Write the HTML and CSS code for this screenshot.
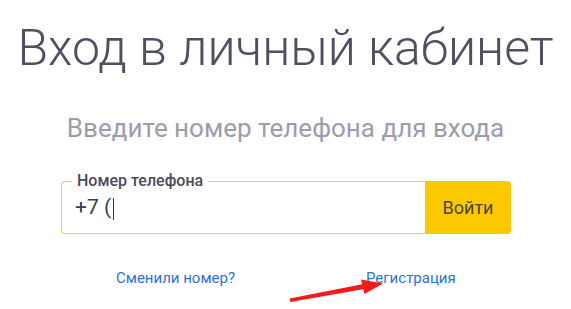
FILE: index.html
```html
<!DOCTYPE html>
<html lang="ru">
<head>
    <meta charset="UTF-8">
    <meta name="viewport" content="width=device-width, initial-scale=1.0">
    <title>Вход в личный кабинет</title>
    <link rel="stylesheet" href="styles.css">
</head>
<body>
    <div class="container">
        <h1>Вход в личный кабинет</h1>
        <p class="subtitle">Введите номер телефона для входа</p>

        <form class="login-form">
            <fieldset class="phone-field">
                <legend>Номер телефона</legend>
                <span class="phone-value">+7 (<span class="caret"></span></span>
            </fieldset>
            <button type="button">Войти</button>
        </form>

        <div class="links">
            <a href="#" class="link-change">Сменили номер?</a>
            <a href="#" class="link-register">Регистрация</a>
            <!-- стрелка к регистрации -->
            <svg class="arrow" width="104" height="26" viewBox="0 0 104 26">
                <polygon points="6.3,23 5.7,19.6 79.5,5 80.5,10" fill="#f21c1c"/>
                <polygon points="99,4.5 77,0.5 80.5,15" fill="#f21c1c"/>
            </svg>
        </div>
    </div>
</body>
</html>
```

FILE: styles.css
```css
* {
    margin: 0;
    padding: 0;
    box-sizing: border-box;
}

html, body {
    min-height: 100%;
}

body {
    background: #ffffff;
    font-family: 'Roboto', 'Liberation Sans', sans-serif;
}

.container {
    padding: 20px 0 22px;
    text-align: center;
}

h1 {
    font-size: 50px;
    font-weight: 300;
    color: #4f4f62;
    line-height: 56px;
}

.subtitle {
    margin-top: 37px;
    font-size: 26px;
    font-weight: 400;
    color: #9c9cab;
    line-height: 30px;
}

.login-form {
    display: flex;
    width: 450px;
    height: 53px;
    margin: 38px 0 0 61px;
}

.phone-field {
    flex: 1;
    border: 1px solid #f2cf3c;
    border-right: none;
    border-radius: 4px 0 0 4px;
    padding: 0 13px;
    margin-top: -9px;
    text-align: left;
}

.phone-field legend {
    padding: 0 5px;
    margin-left: -3px;
    font-size: 16px;
    font-weight: 500;
    color: #4a4a5c;
    line-height: 18px;
}

.phone-value {
    display: flex;
    align-items: center;
    padding-top: 2px;
    font-size: 21px;
    color: #3c3c4a;
    line-height: 30px;
}

.caret {
    display: inline-block;
    width: 1px;
    height: 22px;
    background: #333;
    margin: 3px 0 0 2px;
}

button {
    width: 86px;
    background: #fcc800;
    border: none;
    border-radius: 0 4px 4px 0;
    font-family: 'Roboto', 'Liberation Sans', sans-serif;
    font-size: 18px;
    color: #4d4638;
}

.links {
    position: relative;
    display: flex;
    margin-top: 35px;
    font-size: 15px;
    line-height: 18px;
}

.links a {
    color: #2e71d4;
    text-decoration: none;
}

.link-change {
    margin-left: 116px;
}

.link-register {
    margin-left: 131px;
}

.arrow {
    position: absolute;
    left: 284px;
    top: 10px;
}
```
